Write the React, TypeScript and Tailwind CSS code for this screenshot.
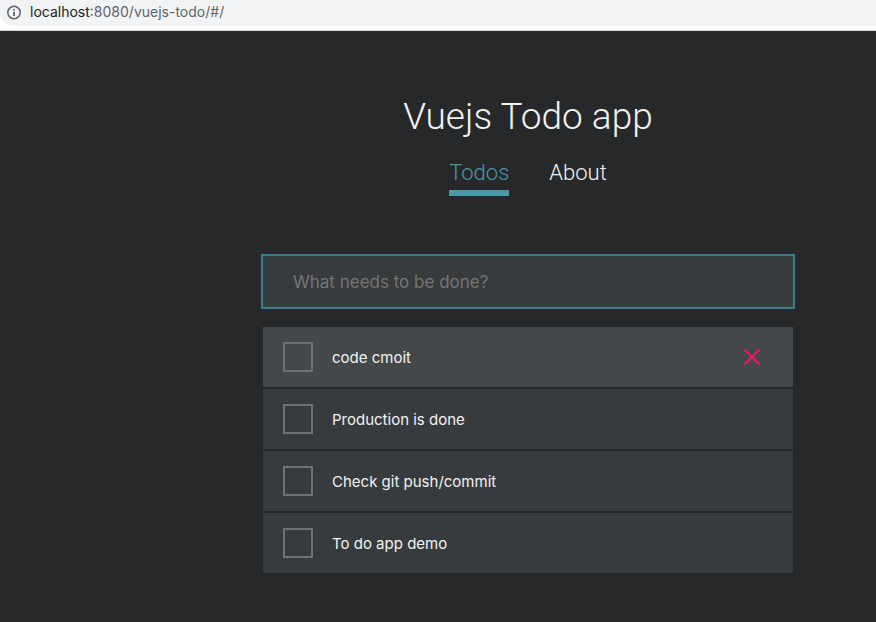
import { useState } from "react";

const initialTodos = [
  "code cmoit",
  "Production is done",
  "Check git push/commit",
  "To do app demo",
];

function AddressBar() {
  return (
    <header className="h-[31px] border-b border-[#d5d6d9] bg-white">
      <div className="flex h-[26px] items-center rounded-bl-[14px] bg-[#f1f3f4] pb-[2px] pl-[7px] text-sm text-[#5f6368]">
        <svg
          className="mr-2 size-[15px]"
          viewBox="0 0 15 15"
          fill="none"
          stroke="#5f6368"
          strokeWidth="1.5"
          aria-hidden="true"
        >
          <circle cx="7" cy="7.5" r="6.2" />
          <path d="M7 6.7v4.2M7 4v1.6" strokeWidth="1.8" />
        </svg>
        <span className="text-[#202124]">localhost</span>
        <span>:8080/vuejs-todo/#/</span>
      </div>
    </header>
  );
}

function TodoRow({ text, active, onRemove }: { text: string; active: boolean; onRemove: () => void }) {
  return (
    <li className={`flex h-15 items-center px-5 ${active ? "bg-[#45484a]" : "bg-[#373b3d]"}`}>
      <label className="flex flex-1 items-center gap-[19px]">
        <input
          type="checkbox"
          className="size-[30px] appearance-none border-2 border-[#697274] checked:bg-[#4899a8]"
        />
        <span className="pt-[2px]">{text}</span>
      </label>
      {active && (
        <button type="button" aria-label={`Remove ${text}`} onClick={onRemove} className="mr-3">
          <svg className="size-[18px]" viewBox="0 0 18 18" stroke="#ec1668" strokeWidth="2.2" fill="none">
            <path d="M1.5 1.5l15 15M16.5 1.5l-15 15" />
          </svg>
        </button>
      )}
    </li>
  );
}

export default function App() {
  const [todos, setTodos] = useState(initialTodos);
  return (
    <div className="flex min-h-screen flex-col bg-[#272829] font-['Inter',sans-serif] text-[#f2f2f2]">
      <AddressBar />
      <main className="flex-1 pt-[59px] pb-10 pl-[180px]">
        <div className="mx-auto max-w-[534px]">
          <h1 className="text-center font-['Roboto',sans-serif] text-[37px] leading-[54px] font-light">
            Vuejs Todo app
          </h1>
          <nav className="mt-3 flex justify-center gap-10 font-['Roboto',sans-serif] text-[22px] leading-[34px] font-light">
            <a href="#/" className="border-b-6 border-[#4899a8] text-[#4899a8]">
              Todos
            </a>
            <a href="#/about">About</a>
          </nav>
          <input
            type="text"
            aria-label="New todo"
            placeholder="What needs to be done?"
            className="mt-[58px] block h-[55px] w-full border-2 border-[#3a7d8b] bg-[#373b3d] px-[30px] text-[17px] outline-none placeholder:text-[#757575]"
          />
          <ul className="mx-[2px] mt-[18px] flex flex-col gap-[2px] text-[15px] leading-6">
            {todos.map((text, i) => (
              <TodoRow
                key={text}
                text={text}
                active={i === 0}
                onRemove={() => setTodos(todos.filter((t) => t !== text))}
              />
            ))}
          </ul>
        </div>
      </main>
    </div>
  );
}
